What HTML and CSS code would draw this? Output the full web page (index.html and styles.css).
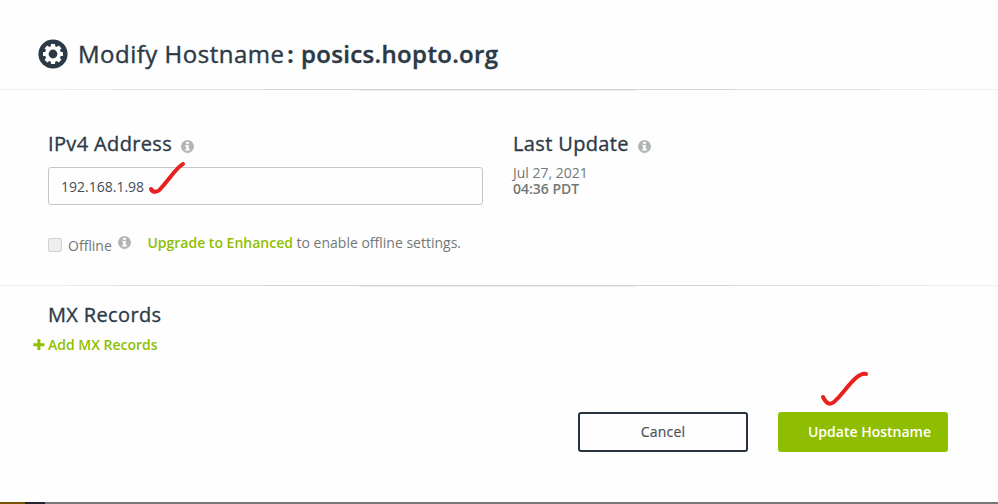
FILE: index.html
```html
<!DOCTYPE html>
<html lang="en">
<head>
<meta charset="utf-8">
<title>Modify Hostname</title>
<link rel="stylesheet" href="styles.css">
</head>
<body>
<svg class="defs" aria-hidden="true">
  <symbol id="info" viewBox="0 0 12 12"><circle cx="6" cy="6" r="6" fill="#b2b5b5"/><path d="M4.8 1.7h2.4v2H4.8zM4 4.6h3.2v3.6h.9v1.5H3.9V8.2h.9V6H4z" fill="#fff"/></symbol>
</svg>
<main class="dialog">
  <header class="title-bar">
    <svg class="gear" viewBox="0 0 30 30"><circle cx="15" cy="15" r="14.6" fill="#2c3a47"/><g fill="#fff"><circle cx="15" cy="15" r="8"/><g id="teeth"><rect x="12.9" y="5" width="4.2" height="20" rx=".6"/><rect x="5" y="12.9" width="20" height="4.2" rx=".6"/></g><use href="#teeth" transform="rotate(45 15 15)"/></g><circle cx="15" cy="15" r="4.4" fill="#2c3a47"/></svg>
    <h1><span class="title-label">Modify Hostname</span><span class="colon">:</span><strong>posics.hopto.org</strong></h1>
  </header>
  <div class="divider"></div>
  <section class="settings">
    <div class="address">
      <h2>IPv4 Address<svg class="info"><use href="#info"/></svg></h2>
      <div class="field"><span>192.168.1.98</span>
        <svg class="tick tick-field" viewBox="0 0 38 34"><path d="M3 28C5 32 10 32 14 26C22 17 29 6 35 3" /></svg>
      </div>
      <div class="offline">
        <span class="checkbox"></span><span class="offline-label">Offline</span><svg class="info info-small"><use href="#info"/></svg>
        <p><a>Upgrade to Enhanced</a> to enable offline settings.</p>
      </div>
    </div>
    <div class="update">
      <h2>Last Update<svg class="info"><use href="#info"/></svg></h2>
      <p class="date">Jul 27, 2021<br><b>04:36 PDT</b></p>
    </div>
  </section>
  <div class="divider"></div>
  <section class="records">
    <h2>MX Records</h2>
    <a class="add"><svg class="plus" viewBox="0 0 12 12"><path d="M4.4.3h3v3.9h4v3h-4v3.9h-3V7.2h-4v-3h4z" fill="#8fbe00"/></svg><span>Add MX Records</span></a>
  </section>
  <div class="actions">
    <div class="button cancel">Cancel</div>
    <div class="button submit"><span>Update Hostname</span>
      <svg class="tick tick-submit" viewBox="0 0 50 40"><path d="M4 28C8 36 12 37 18 30C27 21 38 3 47 5" /></svg>
    </div>
  </div>
  <footer class="strip"><span class="strip-brown"></span><span class="strip-dark"></span><span class="strip-gray"></span></footer>
</main>
</body>
</html>
```
FILE: styles.css
```css
* { box-sizing: border-box; }
body { margin: 0; background: #fefefe; font-family: "Open Sans", sans-serif; color: #737876; font-size: 14px; }
h1, h2, p { margin: 0; white-space: nowrap; }
.defs { position: absolute; width: 0; height: 0; }
.dialog { width: 998px; height: 504px; display: flex; flex-direction: column; overflow: hidden; }
.title-bar { height: 89px; padding: 19px 0 0 38px; display: flex; align-items: center; }
.gear { width: 30px; height: 30px; margin-right: 10px; }
h1 { display: flex; font-size: 24px; line-height: 34px; font-weight: 400; color: #2c3a47; }
.title-label { width: 208px; letter-spacing: .5px; -webkit-text-stroke: .4px #2c3a47; }
.colon { width: 15px; padding-left: 1px; font-weight: 700; }
h1 strong { font-weight: 600; letter-spacing: .34px; -webkit-text-stroke: .4px #2c3a47; }
.divider { height: 2px; flex: none; background: linear-gradient(90deg, transparent 36%, #eee 36%, #eee 63.7%, transparent 63.7%) 0 1px / 100% 1px no-repeat, linear-gradient(90deg, #f0f0f0 0 6.7%, #e8e8e8 6.7% 11.7%, #dedede 11.7% 26.5%, #d5d5d5 26.5% 73.5%, #dedede 73.5% 88%, #e8e8e8 88% 93%, #f0f0f0 93%) 0 0 / 100% 1px no-repeat; }
.settings { height: 194px; padding: 39px 0 0 48px; display: flex; gap: 30px; }
.address { width: 435px; }
h2 { display: flex; align-items: center; font-size: 20px; line-height: 28px; font-weight: 400; letter-spacing: .36px; -webkit-text-stroke: .35px #2c3a47; color: #2c3a47; }
.info { width: 13px; height: 13px; margin: 4px 0 0 9px; }
.field { position: relative; height: 38px; margin-top: 9px; border: 1px solid #c4c6c7; border-radius: 3px; padding: 0 12px; line-height: 38px; color: #444c57; }
.tick { position: absolute; overflow: visible; fill: none; stroke: #e82020; stroke-width: 4; stroke-linecap: round; }
.tick-field { width: 38px; height: 34px; left: 99px; top: -7px; }
.offline { display: flex; margin-top: 28px; }
.checkbox { width: 14px; height: 14px; margin-top: 5px; border: 1px solid #d0d0d0; border-radius: 2px; background: #eee; }
.offline-label { width: 50px; margin-left: 6px; line-height: 20px; margin-top: 3px; }
.offline .info-small { margin: 3px 16.4px 0 0; }
.offline p { line-height: 20px; }
a, b { font-weight: 600; }
a { color: #8fbe00; }
.date { line-height: 16px; margin-top: 7px; }
.records { height: 125px; padding: 14px 0 0 33px; }
.records h2 { margin-left: 15px; }
.add { display: flex; align-items: center; margin-top: 6px; line-height: 20px; }
.plus { width: 12px; height: 12px; margin-right: 3px; }
.actions { display: flex; justify-content: flex-end; gap: 30px; padding-right: 50px; }
.button { width: 170px; height: 40px; border-radius: 3px; line-height: 40px; text-align: center; }
.cancel { border: 2px solid #273440; line-height: 36px; color: #4a5157; letter-spacing: .2px; -webkit-text-stroke: .2px #4a5157; }
.submit { position: relative; background: #8fbe00; color: #fff; padding-left: 13px; font-weight: 600; }
.tick-submit { width: 50px; height: 40px; left: 41px; top: -43px; }
.strip { height: 2px; margin-top: auto; display: flex; }
.strip-brown { width: 25px; background: #775000; }
.strip-dark { width: 20px; background: #25232f; }
.strip-gray { flex: 1; background: #777; }
```
